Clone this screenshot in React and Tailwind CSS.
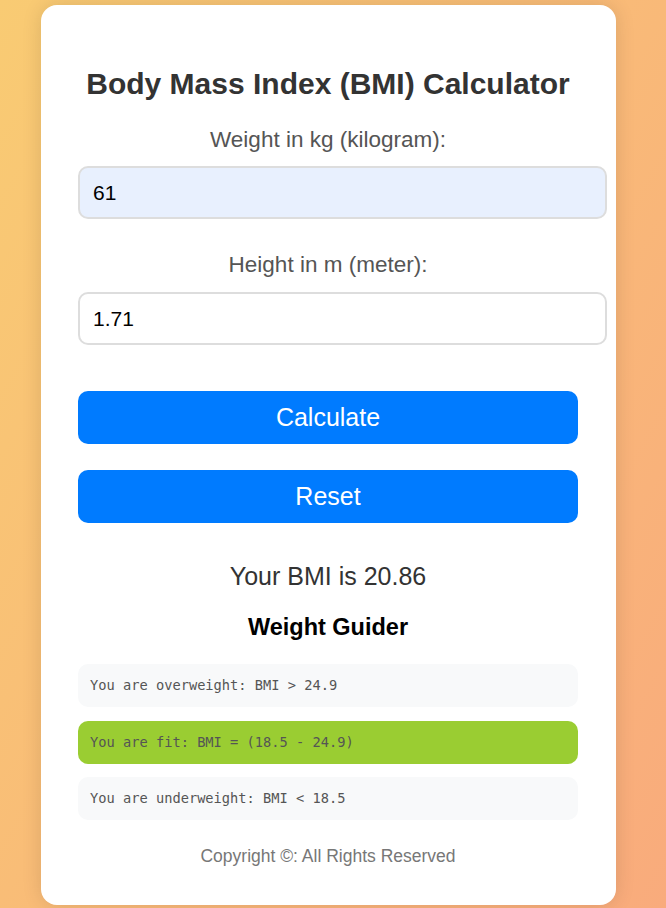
export default function App() {
  return (
    <div className="min-h-[908px] w-full bg-[linear-gradient(120deg,#f9cb73_0%,#f9ab7c_100%)] pt-[5px] pb-[3px]" style={{ fontFamily: '"Liberation Sans", Arial, sans-serif' }}>
      <div className="ml-[41px] w-[575px] h-[900px] rounded-[16px] bg-white shadow-[0_0_20px_rgba(0,0,0,0.12)] pt-[63px] pl-[37px] pr-[38px] flex flex-col">
        <h1 className="text-[30px] leading-[32px] font-bold text-[#333] text-center w-[500px]">Body Mass Index (BMI) Calculator</h1>
        <label className="mt-[28px] text-[22.5px] leading-[24px] text-[#555] text-center block w-[500px]">Weight in kg (kilogram):</label>
        <input readOnly value="61" className="mt-[14px] w-[529px] h-[53px] rounded-[10px] border-2 border-[#ddd] bg-[#e8f0fe] px-[13px] text-[21px] text-black outline-none" />
        <label className="mt-[34px] text-[22.5px] leading-[24px] text-[#555] text-center block w-[500px]">Height in m (meter):</label>
        <input readOnly value="1.71" className="mt-[15px] w-[529px] h-[53px] rounded-[10px] border-2 border-[#ddd] bg-white px-[13px] text-[21px] text-black outline-none" />
        <button className="mt-[46px] w-[500px] h-[53px] rounded-[10px] bg-[#007bff] text-white text-[25px]">Calculate</button>
        <button className="mt-[26px] w-[500px] h-[53px] rounded-[10px] bg-[#007bff] text-white text-[25px]">Reset</button>
        <p className="mt-[40px] text-[25px] leading-[26px] text-[#333] text-center w-[500px]">Your BMI is 20.86</p>
        <h3 className="mt-[26px] text-[23.5px] leading-[24px] font-bold text-black text-center w-[500px]">Weight Guider</h3>
        <div className="mt-[25px] w-[500px] flex flex-col gap-[13.5px]" style={{ fontFamily: '"DejaVu Sans Mono", monospace' }}>
          <div className="h-[43px] rounded-[10px] bg-[#f8f9fa] pl-[12px] flex items-center text-[13.7px] text-[#555]">You are overweight: BMI &gt; 24.9</div>
          <div className="h-[43px] rounded-[10px] bg-[#9acd32] pl-[12px] flex items-center text-[13.7px] text-[#555]">You are fit: BMI = (18.5 - 24.9)</div>
          <div className="h-[43px] rounded-[10px] bg-[#f8f9fa] pl-[12px] flex items-center text-[13.7px] text-[#555]">You are underweight: BMI &lt; 18.5</div>
        </div>
        <p className="mt-[26px] text-[17.5px] leading-[20px] text-[#777] text-center w-[500px]">Copyright ©: All Rights Reserved</p>
      </div>
    </div>
  );
}
